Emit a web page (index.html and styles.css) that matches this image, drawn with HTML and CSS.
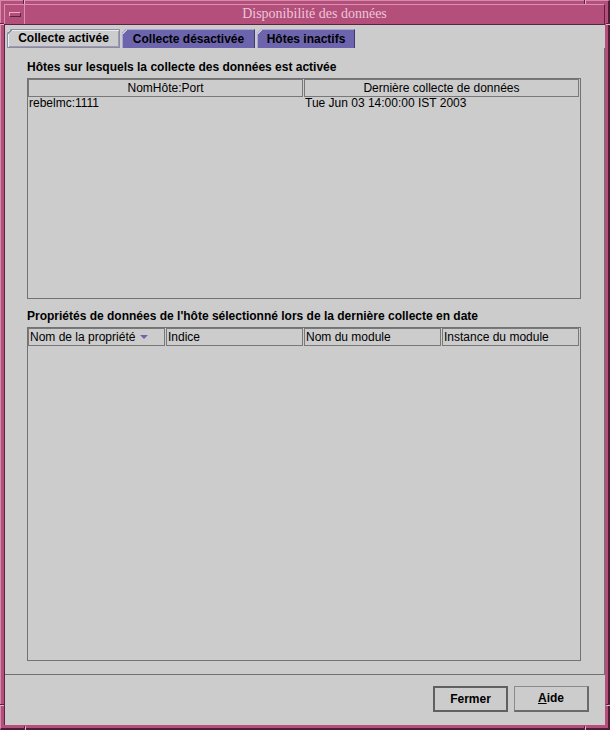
FILE: index.html
```html
<!DOCTYPE html>
<html lang="fr">
<head>
<meta charset="utf-8">
<title>Disponibilité des données</title>
<link rel="stylesheet" href="styles.css">
</head>
<body>
<div class="window">
  <span class="tick tv tick-tl-h"></span>
  <span class="tick th-l tick-tl-v"></span>
  <span class="tick tv tick-tr-h"></span>
  <span class="tick th-l tick-tr-v"></span>
  <span class="tick tv tick-bl-h"></span>
  <span class="tick th-l tick-bl-v"></span>
  <span class="tick tv tick-br-h"></span>
  <span class="tick th-l tick-br-v"></span>
  <div class="titlebar">
    <div class="menubtn"><span class="menubar"></span></div>
    <div class="title">Disponibilité des données</div>
  </div>
  <div class="client">
    <div class="tabs">
      <div class="tab tab-active w1">Collecte activée</div>
      <div class="tab w2">Collecte désactivée</div>
      <div class="tab w3">Hôtes inactifs</div>
    </div>
    <div class="panel">
      <div class="label">Hôtes sur lesquels la collecte des données est activée</div>
      <div class="table t1">
        <div class="thead cols2">
          <div class="th center">NomHôte:Port</div>
          <div class="th center">Dernière collecte de données</div>
        </div>
        <div class="trow cols2">
          <div class="td">rebelmc:1111</div>
          <div class="td">Tue Jun 03 14:00:00 IST 2003</div>
        </div>
      </div>
      <div class="label l2">Propriétés de données de l'hôte sélectionné lors de la dernière collecte en date</div>
      <div class="table t2">
        <div class="thead cols4">
          <div class="th">Nom de la propriété <svg class="sort" width="8" height="5" viewBox="0 0 8 5"><polygon points="0,0 8,0 4,4" fill="#6b63b0"/></svg></div>
          <div class="th">Indice</div>
          <div class="th">Nom du module</div>
          <div class="th">Instance du module</div>
        </div>
      </div>
    </div>
    <div class="buttons">
      <div class="btn btn-default">Fermer</div>
      <div class="btn"><span class="mn">A</span>ide</div>
    </div>
  </div>
</div>
</body>
</html>
```

FILE: styles.css
```css
html, body {
  margin: 0;
  padding: 0;
  width: 610px;
  height: 730px;
  overflow: hidden;
  background: #cccccc;
}

.window {
  position: relative;
  box-sizing: border-box;
  width: 610px;
  height: 730px;
  background: #b34f7a;
  border-style: solid;
  border-width: 1px 2px 2px 1px;
  border-color: #d48aa8 #4e1d35 #4e1d35 #d48aa8;
  padding: 3px;
  display: flex;
  flex-direction: column;
}

/* resize-handle ticks on the window frame */
.tick {
  position: absolute;
}

.tv {
  width: 1px;
  height: 4px;
  background: #e6b4ca;
  box-shadow: -1px 0 0 #5a2340;
}

.th-l {
  width: 4px;
  height: 1px;
  background: #e6b4ca;
  box-shadow: 0 -1px 0 #5a2340;
}

.tick-tl-h { left: 23px; top: -1px; }
.tick-tl-v { left: -1px; top: 23px; }
.tick-tr-h { left: 584px; top: -1px; }
.tick-tr-v { right: -2px; top: 23px; }
.tick-bl-h { left: 24px; bottom: -2px; }
.tick-bl-v { left: -1px; top: 704px; }
.tick-br-h { left: 584px; bottom: -2px; }
.tick-br-v { right: -2px; top: 704px; }

.titlebar {
  box-sizing: border-box;
  height: 20px;
  flex: none;
  display: flex;
  border-top: 1px solid #d990b1;
  border-left: 1px solid #d990b1;
  border-right: 1px solid #5a2340;
}

.menubtn {
  box-sizing: border-box;
  width: 20px;
  flex: none;
  border-right: 1px solid #d990b1;
  display: flex;
  align-items: center;
  justify-content: center;
}

.menubar {
  box-sizing: border-box;
  width: 12px;
  height: 5px;
  border-top: 1px solid #e8b0c8;
  border-left: 1px solid #e8b0c8;
  border-right: 1px solid #5a2340;
  border-bottom: 1px solid #5a2340;
}

.title {
  flex: 1;
  text-align: center;
  font-family: "Liberation Serif", serif;
  font-size: 14px;
  line-height: 18px;
  color: #ecc6d8;
}

.client {
  flex: 1;
  display: flex;
  flex-direction: column;
  background: #cccccc;
  border-top: 1px solid #5a2340;
  border-left: 1px solid #5a2340;
  font-family: "Liberation Sans", Arial, sans-serif;
  font-size: 12px;
  color: #000;
}

.tabs {
  display: flex;
  gap: 2px;
  margin-top: 4px;
  padding-left: 2px;
  height: 19px;
  flex: none;
}

.tab {
  position: relative;
  box-sizing: border-box;
  height: 19px;
  font-weight: bold;
  line-height: 18px;
  text-align: center;
  background: #6c64ad;
  border-top: 1px solid #aaa4d0;
  border-left: 1px solid #aaa4d0;
  border-right: 1px solid #3e3a70;
  clip-path: polygon(4px 0, 100% 0, 100% 100%, 0 100%, 0 4px);
}

.tab::before {
  content: "";
  position: absolute;
  left: -1px;
  top: -1px;
  width: 5px;
  height: 5px;
  background: linear-gradient(135deg, transparent 40%, #c8c4e0 40%, #c8c4e0 62%, transparent 62%);
}

.tab-active {
  background: #cccccc;
  border: 1px solid #8a8aa6;
  box-shadow: inset 1px 1px 0 #ececf4, inset -1px -1px 0 #9a9ab0;
  line-height: 16px;
}

.tab-active::before {
  background: linear-gradient(135deg, transparent 40%, #8a8aa6 40%, #8a8aa6 62%, transparent 62%);
}

.w1 { width: 113px; }
.w2 { width: 133px; }
.w3 { width: 98px; }

.panel {
  box-sizing: border-box;
  width: 600px;
  height: 627px;
  flex: none;
  border-right: 1px solid #707070;
  border-bottom: 1px solid #707070;
  padding: 12px 0 13px 22px;
  display: flex;
  flex-direction: column;
}

.label {
  font-weight: bold;
  line-height: 14px;
  height: 14px;
  white-space: nowrap;
}

.l2 {
  margin-top: 10px;
}

.table {
  box-sizing: border-box;
  width: 554px;
  margin-top: 4px;
  border: 1px solid #727272;
}

.t1 { height: 221px; }
.t2 { height: 334px; }

.thead {
  display: grid;
  gap: 1px;
}

.cols2 { grid-template-columns: 275px 275px; }
.cols4 { grid-template-columns: 137px 137px 137px 137px; }

.th {
  box-sizing: border-box;
  height: 18px;
  border: 1px solid #787878;
  line-height: 16px;
  padding-left: 1px;
  white-space: nowrap;
  overflow: hidden;
}

.center {
  text-align: center;
  padding-left: 0;
}

.sort {
  vertical-align: 1px;
  margin-left: 1px;
}

.trow {
  display: grid;
  gap: 1px;
  height: 16px;
}

.td {
  line-height: 13px;
  padding-left: 1px;
  white-space: nowrap;
}

.buttons {
  flex: 1;
  display: flex;
  justify-content: flex-end;
  align-items: flex-start;
  gap: 6px;
  padding: 11px 16px 0 0;
}

.btn {
  box-sizing: border-box;
  width: 75px;
  height: 26px;
  font-weight: bold;
  text-align: center;
  line-height: 23px;
  border-top: 1px solid #8a8a8a;
  border-left: 1px solid #8a8a8a;
  border-right: 2px solid #6a6a6a;
  border-bottom: 2px solid #6a6a6a;
}

.btn-default {
  width: 75px;
  border: 2px solid #606060;
  line-height: 22px;
}

.mn {
  text-decoration: underline;
}
```
